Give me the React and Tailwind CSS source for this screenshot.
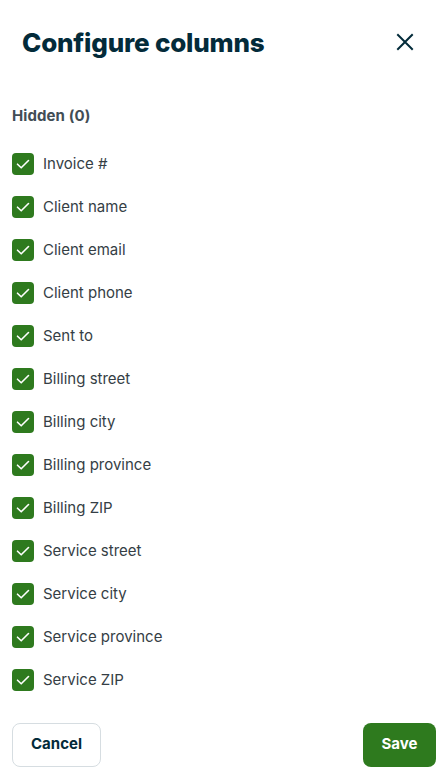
const columns = [
  'Invoice #',
  'Client name',
  'Client email',
  'Client phone',
  'Sent to',
  'Billing street',
  'Billing city',
  'Billing province',
  'Billing ZIP',
  'Service street',
  'Service city',
  'Service province',
  'Service ZIP',
];

export default function App() {
  return (
    <div className="w-[444px] h-[780px] bg-white font-['Inter',sans-serif] flex flex-col">
      {/* Header */}
      <div className="flex items-center justify-between pl-[22px] pr-[30px] pt-[16px] h-[68px]">
        <h1 className="text-[26px] font-extrabold text-[#032b3a] tracking-[-0.2px]">Configure columns</h1>
        <button className="text-[#032b3a]">
          <svg width="18" height="18" viewBox="0 0 18 18" fill="none" stroke="currentColor" strokeWidth="2" strokeLinecap="square">
            <path d="M2 2L16 16M16 2L2 16" />
          </svg>
        </button>
      </div>

      <div className="px-3 pt-[37px]">
        <h2 className="text-[15px] font-bold text-[#424d55] mb-[15px] tracking-[0.1px]">Hidden (0)</h2>
        <div className="flex flex-col">
          {columns.map(c => (
            <label key={c} className="flex items-center gap-[9px] h-[43px]">
              <span className="w-[22px] h-[22px] rounded-[4px] bg-[#2e7a1e] flex items-center justify-center">
                <svg width="16" height="16" viewBox="0 0 16 16" fill="none" stroke="white" strokeWidth="1.6" strokeLinecap="round" strokeLinejoin="round">
                  <path d="M2.5 8.2L6.2 11.8L13.5 4.5" />
                </svg>
              </span>
              <span className="text-[15px] text-[#353e45]">{c}</span>
            </label>
          ))}
        </div>
      </div>

      {/* Footer */}
      <div className="flex items-center justify-between pl-3 pr-2 pt-[21px]">
        <button className="w-[89px] h-[44px] rounded-[8px] border border-[#d6dde1] text-[15px] font-bold text-[#032b3a]">Cancel</button>
        <button className="w-[73px] h-[44px] rounded-[8px] bg-[#2e7a1e] text-[15px] font-bold text-white">Save</button>
      </div>
    </div>
  );
}
